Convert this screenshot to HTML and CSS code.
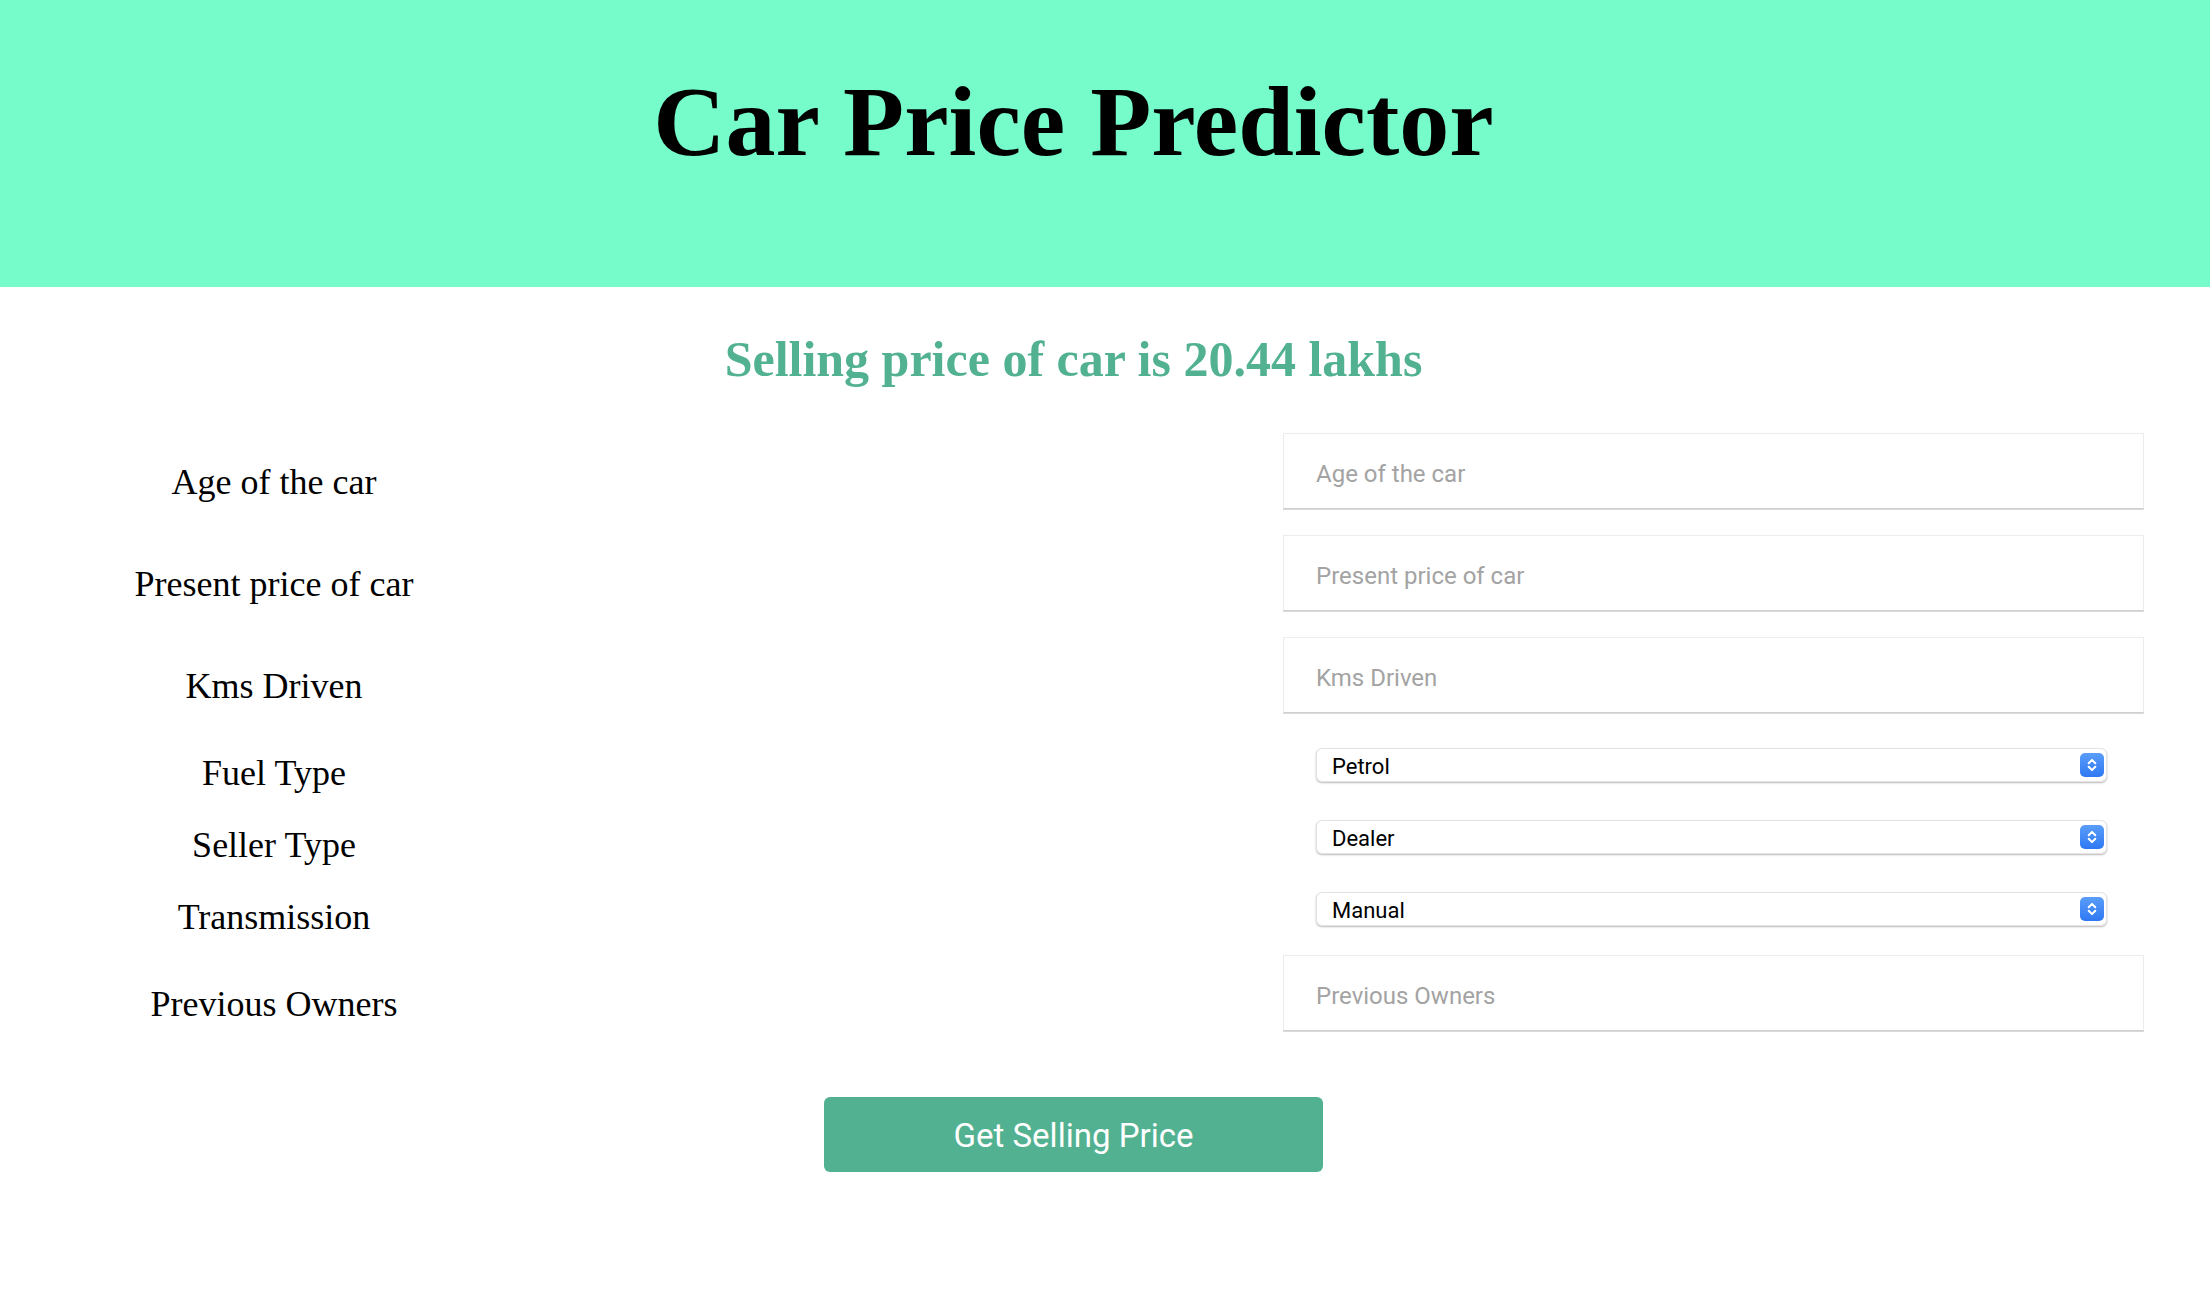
FILE: index.html
```html
<!DOCTYPE html>
<html lang="en">
<head>
<meta charset="utf-8">
<title>Car Price Predictor</title>
<link rel="stylesheet" href="styles.css">
</head>
<body>
<header class="header">
  <div class="header-inner">
    <h1 class="title">Car Price Predictor</h1>
  </div>
</header>
<main class="main">
  <h2 class="result">Selling price of car is 20.44 lakhs</h2>
  <form class="form">
    <div class="field field-text">
      <label class="label" for="age">Age of the car</label>
      <input class="input" id="age" type="text" placeholder="Age of the car">
    </div>
    <div class="field field-text">
      <label class="label" for="price">Present price of car</label>
      <input class="input" id="price" type="text" placeholder="Present price of car">
    </div>
    <div class="field field-text">
      <label class="label" for="kms">Kms Driven</label>
      <input class="input" id="kms" type="text" placeholder="Kms Driven">
    </div>
    <div class="field field-select">
      <label class="label" for="fuel">Fuel Type</label>
      <div class="select-wrap">
        <select class="select" id="fuel"><option>Petrol</option><option>Diesel</option><option>CNG</option></select>
        <svg class="stepper" viewBox="0 0 24 24" aria-hidden="true"><defs><linearGradient id="g1" x1="0" y1="0" x2="0" y2="1"><stop offset="0" stop-color="#5a9df9"/><stop offset="1" stop-color="#2f78f3"/></linearGradient></defs><rect width="24" height="24" rx="5" fill="url(#g1)"/><path d="M8.7 10.2 L12 6.9 L15.3 10.2 M8.7 13.8 L12 17.1 L15.3 13.8" fill="none" stroke="#fff" stroke-width="2" stroke-linecap="round" stroke-linejoin="round"/></svg>
      </div>
    </div>
    <div class="field field-select">
      <label class="label" for="seller">Seller Type</label>
      <div class="select-wrap">
        <select class="select" id="seller"><option>Dealer</option><option>Individual</option></select>
        <svg class="stepper" viewBox="0 0 24 24" aria-hidden="true"><defs><linearGradient id="g2" x1="0" y1="0" x2="0" y2="1"><stop offset="0" stop-color="#5a9df9"/><stop offset="1" stop-color="#2f78f3"/></linearGradient></defs><rect width="24" height="24" rx="5" fill="url(#g2)"/><path d="M8.7 10.2 L12 6.9 L15.3 10.2 M8.7 13.8 L12 17.1 L15.3 13.8" fill="none" stroke="#fff" stroke-width="2" stroke-linecap="round" stroke-linejoin="round"/></svg>
      </div>
    </div>
    <div class="field field-select">
      <label class="label" for="trans">Transmission</label>
      <div class="select-wrap">
        <select class="select" id="trans"><option>Manual</option><option>Automatic</option></select>
        <svg class="stepper" viewBox="0 0 24 24" aria-hidden="true"><defs><linearGradient id="g3" x1="0" y1="0" x2="0" y2="1"><stop offset="0" stop-color="#5a9df9"/><stop offset="1" stop-color="#2f78f3"/></linearGradient></defs><rect width="24" height="24" rx="5" fill="url(#g3)"/><path d="M8.7 10.2 L12 6.9 L15.3 10.2 M8.7 13.8 L12 17.1 L15.3 13.8" fill="none" stroke="#fff" stroke-width="2" stroke-linecap="round" stroke-linejoin="round"/></svg>
      </div>
    </div>
    <div class="field field-text">
      <label class="label" for="owners">Previous Owners</label>
      <input class="input" id="owners" type="text" placeholder="Previous Owners">
    </div>
    <button class="button" type="button">Get Selling Price</button>
  </form>
</main>
</body>
</html>
```
FILE: styles.css
```css
html, body {
  margin: 0;
  padding: 0;
  background: #ffffff;
}

body {
  font-family: "Liberation Serif", "Times New Roman", serif;
  color: #000;
}

.header {
  background: #76fbcb;
  height: 287px;
  padding-top: 64px;
  box-sizing: border-box;
}

.header-inner {
  width: 2147px;
  text-align: center;
}

.title {
  margin: 0;
  font-family: "Liberation Serif", "Times New Roman", serif;
  font-weight: bold;
  font-size: 100px;
  line-height: normal;
}

.main {
  width: 2147px;
}

.result {
  margin: 43px 0 45px;
  text-align: center;
  font-family: "Liberation Serif", "Times New Roman", serif;
  font-weight: bold;
  font-size: 50px;
  line-height: normal;
  color: #52b191;
}

.form {
  display: flex;
  flex-direction: column;
  gap: 26px;
  margin: 0;
}

.field {
  display: grid;
  grid-template-columns: 548px 861px;
  justify-content: space-between;
  width: 2144px;
  align-items: start;
}

.field-text {
  height: 76px;
}

.field-select {
  height: 46px;
}

.label {
  display: block;
  text-align: center;
  font-size: 36px;
  line-height: normal;
}

.field-text .label {
  padding-top: 28px;
}

.field-select .label {
  padding-top: 13px;
}

.input {
  display: block;
  width: 100%;
  height: 76px;
  box-sizing: border-box;
  margin: 0;
  padding: 5px 0 0 32px;
  border: 1px solid #ececec;
  border-bottom: 1px solid #cfcfcf;
  box-shadow: 0 1px 0 #dadada;
  border-radius: 0;
  background: #fff;
  font-family: Roboto, "Noto Sans", sans-serif;
  font-size: 24px;
  color: #222;
  outline: none;
}

.input::placeholder {
  color: #a3a3a3;
}

.select-wrap {
  position: relative;
  margin: 9px 37px 3px 33px;
  height: 34px;
}

.select {
  display: block;
  width: 100%;
  height: 34px;
  box-sizing: border-box;
  margin: 0;
  padding: 2px 40px 0 15px;
  -webkit-appearance: none;
  appearance: none;
  border: 1px solid #e4e4e4;
  border-radius: 6px;
  box-shadow: 0 1px 2px rgba(0, 0, 0, 0.28);
  background: #fff;
  font-family: Roboto, "Noto Sans", sans-serif;
  font-size: 22px;
  color: #000;
  outline: none;
}

.stepper {
  position: absolute;
  right: 3px;
  top: 5px;
  width: 24px;
  height: 24px;
  pointer-events: none;
}

.button {
  display: flex;
  align-items: center;
  justify-content: center;
  align-self: center;
  width: 499px;
  height: 75px;
  margin-top: 40px;
  padding: 2px 0 0;
  border: none;
  border-radius: 6px;
  background: #52b191;
  color: #fff;
  font-family: Roboto, "Noto Sans", sans-serif;
  font-size: 33px;
  cursor: pointer;
}
```
